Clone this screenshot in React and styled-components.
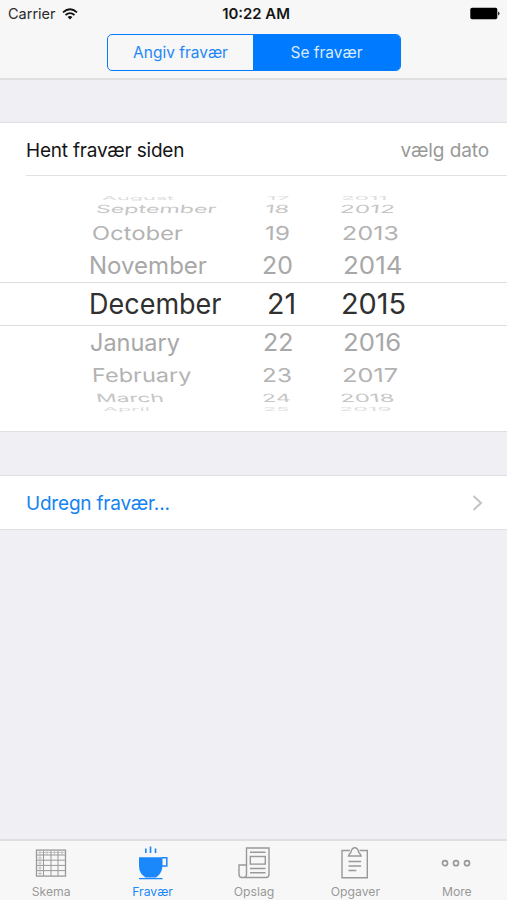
import React, { Component } from 'react'
import styled, { createGlobalStyle, ThemeProvider } from 'styled-components'

const theme = {
  blue: '#007aff',
  grey: '#999999',
  bar: '#f7f7f7',
  page: '#efeff4',
  line: '#dfdfe2'
}

const GlobalStyle = createGlobalStyle`
  * { box-sizing: border-box; }
  body {
    margin: 0;
    font-family: Inter, "Liberation Sans", sans-serif;
    background: #efeff4;
  }
`
const Screen = styled.div`
  display: flex;
  flex-direction: column;
  width: 507px;
  height: 900px;
  overflow: hidden;
  background: ${props => props.theme.page};
`
const Header = styled.header`
  height: 80px;
  background: ${props => props.theme.bar};
  border-bottom: 2px solid ${props => props.theme.line};
`
const StatusBar = styled.div`
  display: grid;
  grid-template-columns: 1fr auto 1fr;
  align-items: center;
  height: 27px;
  padding: 0 7px 0 8px;
  font-size: 14.5px;
  color: #2a2a2a;
`
const Carrier = styled.div`
  display: flex;
  align-items: center;
  gap: 6px;
`
const Clock = styled.div`
  font-weight: 600;
  font-size: 14.9px;
  padding-left: 4px;
  color: #151515;
`
const BatteryIcon = styled.svg`
  justify-self: end;
`
const Segments = styled.div`
  display: flex;
  width: 294px;
  height: 37px;
  margin: 7px auto 0 107px;
  border: 1.5px solid ${props => props.theme.blue};
  border-radius: 5px;
  overflow: hidden;
`
const Segment = styled.button`
  width: ${props => props.$width}px;
  padding: 0;
  border: none;
  font-family: inherit;
  font-size: 15.5px;
  color: ${props => props.$active ? '#d9ebff' : '#1f86f5'};
  background: ${props => props.$active ? props.theme.blue : 'transparent'};
`
const Group = styled.section`
  margin-top: ${props => props.$gap}px;
  background: #fff;
  border-top: 1px solid ${props => props.theme.line};
  border-bottom: 1px solid ${props => props.theme.line};
`
const Row = styled.div`
  display: flex;
  align-items: center;
  justify-content: space-between;
  height: 53px;
  margin-left: 26px;
  padding-top: ${props => props.$ruled ? 2 : 1}px;
  padding-right: ${props => props.$right}px;
  border-bottom: ${props => props.$ruled ? '1px solid #e2e2e5' : 'none'};
`
const Label = styled.span`
  font-size: 19px;
  letter-spacing: ${props => props.$spacing}px;
  color: ${props => props.$color};
`
const Picker = styled.div`
  padding: 19px 0 17px;
`
const PickerRow = styled.div`
  display: grid;
  grid-template-columns: 173px 79px 1fr;
  grid-template-rows: 100%;
  align-items: center;
  height: ${props => props.$height}px;
  padding-left: 89px;
  color: ${props => props.$color};
  ${props => props.$selected && 'border: solid #dedede; border-width: 1px 0;'}
`
const PickerText = styled.span`
  justify-self: start;
  margin-left: ${props => props.$left}px;
  padding-top: 2px;
  font-size: 27px;
  line-height: 34px;
  white-space: nowrap;
  transform: scale(${props => props.$wide}, ${props => props.$tall}) skewX(${props => props.$slant}deg);
  transform-origin: left center;
`
const TabBar = styled.nav`
  display: grid;
  grid-template-columns: repeat(5, 1fr);
  height: 61px;
  margin-top: auto;
  background: ${props => props.theme.bar};
  border-top: 2px solid ${props => props.theme.line};
`
const Tab = styled.div`
  display: flex;
  flex-direction: column;
  align-items: center;
  padding-top: 4px;
  padding-left: 1px;
  font-size: 12.2px;
  line-height: 16px;
  color: ${props => props.$active ? '#1a88fb' : props.theme.grey};
  svg { display: block; margin-bottom: 3px; }
`

// one entry per visible row, cells are [text, left offset, horizontal scale]
const WHEEL = [
  { height: 6, color: '#dedede', tall: 0.2, slant: 0, cells: [['August', 13, 0.8], ['17', 5, 0.86], ['2011', 0, 0.84]] },
  { height: 16, color: '#c6c6c6', tall: 0.42, slant: -4, cells: [['September', 7, 0.86], ['18', 3, 0.88], ['2012', -1, 0.9]] },
  { height: 31, color: '#b3b3b3', tall: 0.71, slant: -1, cells: [['October', 3, 0.88], ['19', 3, 0.9], ['2013', 1, 0.93]] },
  { height: 34, color: '#a8a8a8', tall: 0.89, slant: 0, cells: [['November', 0, 0.89], ['20', 0, 0.92], ['2014', 2, 0.96]] },
  { height: 44, color: '#303030', tall: 1.03, slant: 0, selected: true, cells: [['December', 0, 1], ['21', 5, 1.06], ['2015', 0, 1.07]] },
  { height: 32, color: '#a8a8a8', tall: 0.89, slant: 0, cells: [['January', 1, 0.87], ['22', 1, 0.92], ['2016', 2, 0.95]] },
  { height: 33, color: '#b3b3b3', tall: 0.71, slant: 2, cells: [['February', 3, 0.87], ['23', 0, 0.9], ['2017', 1, 0.94]] },
  { height: 13, color: '#c6c6c6', tall: 0.42, slant: 5, cells: [['March', 7, 0.84], ['24', 0, 0.85], ['2018', -1, 0.89]] },
  { height: 10, color: '#dedede', tall: 0.2, slant: 0, cells: [['April', 14, 0.8], ['25', 1, 0.8], ['2019', -2, 0.86]] }
]

const WifiIcon = () => (
  <svg width="16" height="12" viewBox="0 0 16 12" fill="none" stroke="#111" strokeWidth="1.8">
    <path d="M1 4.4Q8-1.8 15 4.4" />
    <path d="M3.5 7Q8 3.2 12.5 7" />
    <path d="M5.6 9Q8 7 10.4 9L8 11.6Z" fill="#111" stroke="none" />
  </svg>
)

const Battery = () => (
  <BatteryIcon width="31" height="13" viewBox="0 0 31 13">
    <rect x="1.3" y="0.7" width="27" height="11.6" rx="1.8" fill="#000" />
    <path d="M29 4.5q1.6.4 1.6 2t-1.6 2z" fill="#333" />
  </BatteryIcon>
)

const TableIcon = () => (
  <svg width="34" height="36" viewBox="0 0 34 36" fill="none" stroke="#999">
    <rect x="2.5" y="5.1" width="29" height="26" strokeWidth="1.3" />
    <path d="M3 10H31M3 15.2H31M3 20.4H31M3 25.6H31M9.5 6V31M17 6V31M24 6V31" />
    <path d="M4 7.5H31M4 12.8H8M4 18H8M4 23H8M4 28.5H8M6 6V31M13 6V10M20.5 6V10M28 6V10" strokeWidth="0.5" />
  </svg>
)

const CupIcon = () => (
  <svg width="34" height="36" viewBox="0 0 34 36" fill="none" stroke="#1a88fb">
    <path d="M3 12.2H26.5V21Q26 28.5 20 32.4H9.5Q3 28.5 3 21Z" fill="#1a88fb" stroke="none" />
    <path d="M26 12.8H30.8V21H26" strokeWidth="1.5" />
    <path d="M3 33.6H26.5" strokeWidth="1.3" />
    <path d="M9.8 3.5V8M14.5 1.6V8M19.5 3.5V8" strokeWidth="1.6" />
  </svg>
)

const NewsIcon = () => (
  <svg width="34" height="36" viewBox="0 0 34 36" fill="none" stroke="#999" strokeWidth="1.4">
    <path d="M9.5 29.5V3H32V29.5Q32 32.5 29 32.5H5Q2 32.5 2 29.5V20H9.5M9.5 20V29.5Q9.5 32.5 5.7 32.5" />
    <rect x="13.3" y="11.5" width="15" height="7.6" />
    <path d="M13 7.2H28.5M13 23.5H28.5M13 27.8H28.5" />
  </svg>
)

const ClipboardIcon = () => (
  <svg width="34" height="36" viewBox="0 0 34 36" fill="none" stroke="#999" strokeWidth="1.4">
    <path d="M12 5.5H4V32.8H29.3V5.5H21.5" />
    <path d="M10.5 11Q11.1 9 13.1 6.9Q13.8 2.7 16.8 2.7T20.5 6.9Q22.5 9 23.1 11Z" />
    <path d="M10.5 16.5H23.1M10.5 21H23.1M10.5 25.5H18.3" />
  </svg>
)

const MoreIcon = () => (
  <svg width="34" height="36" viewBox="0 0 34 36" fill="none" stroke="#999" strokeWidth="1.7">
    <circle cx="5" cy="18.2" r="2.5" />
    <circle cx="16" cy="18.2" r="2.5" />
    <circle cx="27" cy="18.2" r="2.5" />
  </svg>
)

const TABS = [
  { name: 'Skema', Icon: TableIcon },
  { name: 'Fravær', Icon: CupIcon },
  { name: 'Opslag', Icon: NewsIcon },
  { name: 'Opgaver', Icon: ClipboardIcon },
  { name: 'More', Icon: MoreIcon }
]

class App extends Component {
  render() {
    return (
      <ThemeProvider theme={theme}>
        <GlobalStyle />
        <Screen>
          <Header>
            <StatusBar>
              <Carrier>Carrier <WifiIcon /></Carrier>
              <Clock>10:22 AM</Clock>
              <Battery />
            </StatusBar>
            <Segments>
              <Segment $width={145}>Angiv fravær</Segment>
              <Segment $width={147} $active>Se fravær</Segment>
            </Segments>
          </Header>
          <Group $gap={42}>
            <Row $right={18} $ruled>
              <Label $color="#151515" $spacing={-0.2}>Hent fravær siden</Label>
              <Label $color="#999" $spacing={-0.1}>vælg dato</Label>
            </Row>
            <Picker>
              {WHEEL.map((row) => (
                <PickerRow key={row.cells[0][0]} $height={row.height} $color={row.color} $selected={row.selected}>
                  {row.cells.map(([text, left, wide]) => (
                    <PickerText key={text} $left={left} $wide={wide} $tall={row.tall} $slant={row.slant}>
                      {text}
                    </PickerText>
                  ))}
                </PickerRow>
              ))}
            </Picker>
          </Group>
          <Group $gap={43}>
            <Row $right={24}>
              <Label $color="#1583f0" $spacing={-0.2}>Udregn fravær...</Label>
              <svg width="11" height="17" viewBox="0 0 11 17" fill="none" stroke="#c4c4c8" strokeWidth="2">
                <path d="M1.5 1L9 8L1.5 15" />
              </svg>
            </Row>
          </Group>
          <TabBar>
            {TABS.map(({ name, Icon }) => (
              <Tab key={name} $active={name === 'Fravær'}>
                <Icon />
                {name}
              </Tab>
            ))}
          </TabBar>
        </Screen>
      </ThemeProvider>
    )
  }
}

export default App
